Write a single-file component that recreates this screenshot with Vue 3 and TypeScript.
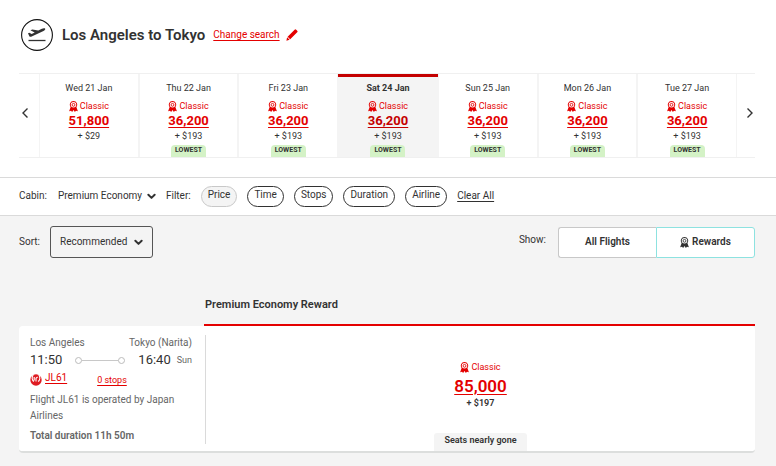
<script setup lang="ts">
import { ref } from 'vue'

interface Fare {
  date: string
  points: string
  tax: string
  lowest: boolean
}

const fares: Fare[] = [
  { date: 'Wed 21 Jan', points: '51,800', tax: '$29', lowest: false },
  { date: 'Thu 22 Jan', points: '36,200', tax: '$193', lowest: true },
  { date: 'Fri 23 Jan', points: '36,200', tax: '$193', lowest: true },
  { date: 'Sat 24 Jan', points: '36,200', tax: '$193', lowest: true },
  { date: 'Sun 25 Jan', points: '36,200', tax: '$193', lowest: true },
  { date: 'Mon 26 Jan', points: '36,200', tax: '$193', lowest: true },
  { date: 'Tue 27 Jan', points: '36,200', tax: '$193', lowest: true },
]
const filters: string[] = ['Price', 'Time', 'Stops', 'Duration', 'Airline']

const selectedDate = ref<string>('Sat 24 Jan')
const cabin = ref<string>('Premium Economy')
const sort = ref<string>('Recommended')
const show = ref<'all' | 'rewards'>('rewards')
</script>

<template>
  <svg class="defs" aria-hidden="true">
    <symbol id="rosette" viewBox="0 0 16 20">
      <path fill="currentColor" fill-rule="evenodd" d="M8 0a7 7 0 0 1 5.300 11.500L16 18.500l-3.500-.6L10.500 20 8 16.500 5.500 20l-2-2.100L0 18.500l2.700-7A7 7 0 0 1 8 0zm0 2a5 5 0 1 0 0 10A5 5 0 0 0 8 2z" />
      <circle cx="8" cy="7" r="2.600" fill="none" stroke="currentColor" stroke-width="1.600" />
    </symbol>
    <symbol id="chevron" viewBox="0 0 10 7">
      <path d="M1.500 1.500 5 5l3.500-3.500" fill="none" stroke="#323232" stroke-width="2.200" stroke-linecap="round" stroke-linejoin="round" />
    </symbol>
  </svg>

  <header class="route">
    <svg class="route-icon" viewBox="0 0 32 32" aria-hidden="true">
      <circle cx="16" cy="16" r="15.400" fill="#fff" stroke="#111" stroke-width="1.100" />
      <path fill="#323232" d="M7 14.200l1.300-.5 2.400 1.300 3-1.500-4.300-2.200 2-.8 5.900 1.100 3.600-1.800c1.400-.7 2.900-.7 3.300-.1s-.5 1.600-1.700 2.200l-11.800 5.600c-1 .4-1.900.3-2.400-.3z" />
      <path d="M7.500 21.500h17" stroke="#323232" stroke-width="1.300" />
    </svg>
    <h1 class="route-title">Los Angeles to Tokyo</h1>
    <a class="change" href="#search">Change search</a>
    <svg class="pencil" viewBox="0 0 12 12" aria-hidden="true">
      <path fill="#e40000" d="M8.600.7q.8-.8 1.600 0l1 1q.8.800 0 1.600L4.200 10.300 1.600 7.700zM1.100 8.300l2.500 2.500L.4 11.700z" />
    </svg>
  </header>

  <nav class="calendar" aria-label="Departure date">
    <button class="arrow" type="button" aria-label="Earlier dates">
      <svg class="arrow-icon" viewBox="0 0 8 12"><path d="M6.500 1.500 2 6l4.500 4.500" /></svg>
    </button>
    <div v-for="fare in fares" :key="fare.date" class="day" :class="{ selected: fare.date === selectedDate }">
      <span class="date">{{ fare.date }}</span>
      <span class="classic"><svg class="rosette" aria-hidden="true"><use href="#rosette" /></svg>Classic</span>
      <a class="points" href="#fare" @click.prevent="selectedDate = fare.date">{{ fare.points }}</a>
      <span class="tax">+ {{ fare.tax }}</span>
      <span v-if="fare.lowest" class="lowest">LOWEST</span>
    </div>
    <button class="arrow next" type="button" aria-label="Later dates">
      <svg class="arrow-icon" viewBox="0 0 8 12"><path d="M1.500 1.500 6 6l-4.500 4.500" /></svg>
    </button>
  </nav>

  <section class="filters">
    <label for="cabin">Cabin:</label>
    <span class="picker cabin">
      <select id="cabin" v-model="cabin">
        <option>Premium Economy</option>
      </select>
      <svg class="chevron" aria-hidden="true"><use href="#chevron" /></svg>
    </span>
    <span>Filter:</span>
    <div class="pills">
      <button v-for="name in filters" :key="name" class="pill" :class="{ muted: name === 'Price' }" type="button">{{ name }}</button>
    </div>
    <a class="clear" href="#clear">Clear All</a>
  </section>

  <main class="results">
    <div class="toolbar">
      <label for="sort">Sort:</label>
      <span class="picker sort">
        <select id="sort" v-model="sort">
          <option>Recommended</option>
        </select>
        <svg class="chevron" aria-hidden="true"><use href="#chevron" /></svg>
      </span>
      <span class="show-label">Show:</span>
      <div class="toggle">
        <button class="choice" :class="{ active: show === 'all' }" type="button" @click="show = 'all'">All Flights</button>
        <button class="choice" :class="{ active: show === 'rewards' }" type="button" @click="show = 'rewards'">
          <svg class="rosette" aria-hidden="true"><use href="#rosette" /></svg>Rewards
        </button>
      </div>
    </div>

    <h2 class="fare-heading">Premium Economy Reward</h2>

    <article class="flight">
      <div class="details">
        <div class="line cities"><span>Los Angeles</span><span>Tokyo (Narita)</span></div>
        <div class="line times">
          <span class="time">11:50</span>
          <span class="track"><span class="rail"></span></span>
          <span class="time">16:40</span>
          <span class="weekday">Sun</span>
        </div>
        <div class="line numbers">
          <svg class="airline" viewBox="0 0 12 12" aria-hidden="true">
            <circle cx="6" cy="6" r="5.700" fill="#df1b22" />
            <path d="M3.200.8C1.700 3 1.700 6.300 4 7.400M8.800.8c1.500 2.200 1.500 5.500-.8 6.600M6 7.600V4.200L7.600 3M4.200 3v3.400" fill="none" stroke="#fff" stroke-width="1.100" />
          </svg>
          <a class="number" href="#flight">JL61</a>
          <a class="stops" href="#stops">0 stops</a>
        </div>
        <p class="operator">Flight JL61 is operated by Japan Airlines</p>
        <p class="duration">Total duration 11h 50m</p>
      </div>
      <div class="reward">
        <span class="classic"><svg class="rosette" aria-hidden="true"><use href="#rosette" /></svg>Classic</span>
        <a class="reward-points" href="#reward">85,000</a>
        <span class="reward-tax">+ $197</span>
        <span class="seats">Seats nearly gone</span>
      </div>
    </article>
  </main>
</template>

<style>
html,
body {
  background: #fff;
}

#app {
  display: flex;
  flex-direction: column;
  min-height: 100vh;
  font: 10px/14px Roboto, "Liberation Sans", sans-serif;
  color: #323232;
}
</style>

<style scoped>
* {
  box-sizing: border-box;
}

.defs {
  position: absolute;
  width: 0;
  height: 0;
}

a {
  color: #e40000;
  text-underline-offset: 2px;
}

button,
select {
  font: inherit;
  color: inherit;
  background: none;
  border: 0;
  padding: 0;
  margin: 0;
}

.route {
  display: flex;
  align-items: center;
  padding: 19px 21px 22px;
}

.route-icon {
  width: 32px;
  height: 32px;
  margin-right: 9px;
}

.route-title {
  margin: 0 8px 0 0;
  font-size: 15px;
  line-height: 20px;
  font-weight: 600;
}

.pencil {
  width: 12px;
  height: 12px;
  margin-left: 6px;
}

.calendar {
  display: grid;
  grid-template-columns: 20px repeat(7, 1fr) 18px;
  margin: 0 21px 0 19px;
  border-top: 1px solid #f0f0f0;
  border-bottom: 1px solid #f0f0f0;
}

.arrow {
  display: flex;
  align-items: center;
  padding-bottom: 5px;
}

.arrow.next {
  justify-content: flex-end;
}

.arrow-icon {
  width: 8px;
  height: 12px;
  margin: 0 2px;
  fill: none;
  stroke: #323232;
  stroke-width: 1.400;
}

.next .arrow-icon {
  margin-right: 1px;
}

.day {
  display: flex;
  flex-direction: column;
  align-items: center;
  height: 83px;
  padding-top: 7px;
  border: solid #f4f4f4;
  border-width: 0 1px;
  font-size: 9px;
}

.day.selected {
  padding-top: 4px;
  border: 0;
  border-top: 3px solid #c40000;
  background: #f4f4f4;
}

.selected .date {
  font-weight: 700;
}

.classic {
  display: flex;
  align-items: center;
  gap: 2px;
  margin-top: 4px;
  font-size: 9px;
  color: #e40000;
}

.rosette {
  width: 9px;
  height: 11px;
}

.points {
  font-size: 13px;
  line-height: 16px;
  font-weight: 700;
}

.selected .points {
  color: #c40000;
}

.lowest {
  width: 35px;
  height: 12px;
  margin-top: 2px;
  border-radius: 4px 4px 0 0;
  background: #d4f2c6;
  font-size: 7px;
  line-height: 10px;
  font-weight: 700;
  text-align: center;
}

.filters {
  display: flex;
  align-items: center;
  height: 39px;
  margin-top: 19px;
  padding: 0 19px 1px;
  border-top: 1px solid #dadada;
  border-bottom: 1px solid #dadada;
}

.picker {
  display: grid;
  align-items: center;
}

.picker > * {
  grid-area: 1 / 1;
}

.picker select {
  appearance: none;
  width: 100%;
}

.chevron {
  justify-self: end;
  width: 9px;
  height: 7px;
  pointer-events: none;
}

.cabin {
  width: 98px;
  margin: 0 10px 0 11px;
}

.pills {
  display: flex;
  gap: 10px;
  margin: 0 10px;
}

.pill {
  height: 21px;
  padding: 0 6px 3px;
  border: 1px solid #323232;
  border-radius: 11px;
}

.pill.muted {
  border-color: #c8c8c8;
  background: #f4f4f4;
}

.clear {
  color: #323232;
}

.results {
  flex: 1;
  padding: 10px 21px 15px 19px;
  background: #f4f4f4;
}

.toolbar {
  display: flex;
  align-items: center;
}

.sort {
  width: 103px;
  height: 32px;
  margin-left: 10px;
  padding: 0 9px;
  border: 1px solid #555;
  border-radius: 3px;
}

.show-label {
  margin: 0 12px 4px auto;
}

.toggle {
  display: flex;
  width: 197px;
  height: 31px;
}

.choice {
  display: flex;
  flex: 1;
  align-items: center;
  justify-content: center;
  gap: 3px;
  border: 1px solid #c8c8c8;
  background: #fff;
  font-weight: 600;
}

.choice:first-child {
  border-right-width: 0;
  border-radius: 3px 0 0 3px;
}

.choice:last-child {
  border-radius: 0 3px 3px 0;
}

.choice.active {
  border-color: #8de2e0;
}

.fare-heading {
  margin: 39px 0 0 185px;
  padding: 0 1px 11px;
  border-bottom: 2px solid #e40000;
  font-size: 11px;
  line-height: 16px;
  font-weight: 600;
}

.flight {
  display: grid;
  grid-template-columns: 187px 1fr;
  padding-top: 9px;
  border-bottom: 2px solid #dcdedd;
  border-radius: 4px;
  background: #fff;
}

.details {
  margin-bottom: 7px;
  padding: 0 13px 0 11px;
  border-right: 1px solid #dadada;
  color: #666;
}

.line {
  display: flex;
  align-items: center;
}

.cities {
  justify-content: space-between;
  height: 16px;
}

.times,
.numbers {
  height: 18px;
}

.time {
  font-size: 13px;
  color: #323232;
}

.track {
  display: flex;
  align-items: center;
  flex: 1;
  margin: 0 13px;
}

.track::before,
.track::after {
  content: "";
  width: 5px;
  height: 5px;
  border: 1px solid #bbb;
  border-radius: 50%;
}

.rail {
  flex: 1;
  height: 1px;
  background: #c8c8c8;
}

.weekday {
  margin-left: 6px;
  font-size: 9px;
}

.airline {
  width: 12px;
  height: 12px;
  margin: 4px 3px 0 0;
}

.stops {
  margin: 4px 0 0 30px;
  font-size: 9px;
}

.operator {
  margin: 5px 0 0;
  line-height: 16px;
}

.duration {
  margin: 4px 0 0;
  line-height: 16px;
  font-weight: 600;
}

.reward {
  display: flex;
  flex-direction: column;
  align-items: center;
  padding-top: 21px;
}

.reward-points {
  margin-top: 2px;
  font-size: 17px;
  line-height: 20px;
  font-weight: 600;
}

.reward-tax {
  font-size: 9px;
  font-weight: 600;
}

.seats {
  margin-top: auto;
  padding: 0 10px 4px;
  border-radius: 3px 3px 0 0;
  background: #f4f4f4;
  font-size: 9px;
  font-weight: 600;
}
</style>
